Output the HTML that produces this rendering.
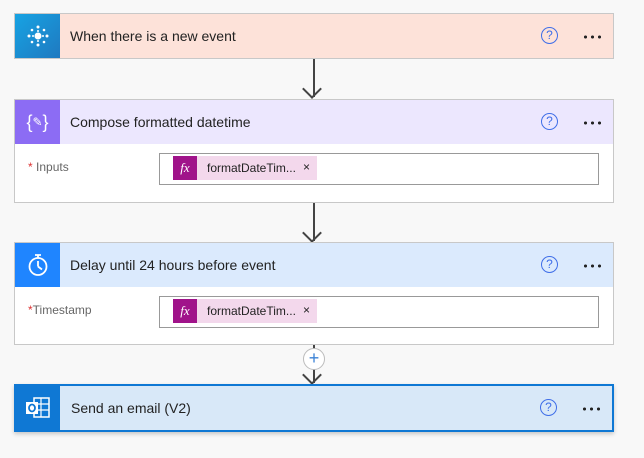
<!DOCTYPE html>
<html><head><style>
body{margin:0;width:644px;height:458px;background:#f8f8f8;font-family:"Liberation Sans",sans-serif;position:relative;overflow:hidden}
.card{position:absolute;left:14px;width:598px;border:1px solid #c8c8c8;background:#fff}
.hd{position:relative;height:44px}
.ic{position:absolute;left:0;top:0;width:45px;height:44px;display:flex;align-items:center;justify-content:center}
.t{position:absolute;left:55px;top:14px;font-size:14px;color:#222}
.q{position:absolute;left:526px;top:13px;width:15px;height:15px;border:1.3px solid #3f6ee8;border-radius:50%;color:#3f6ee8;font-size:12px;text-align:center;line-height:15px}
.d{position:absolute;left:567px;top:21px;width:20px;height:4px;background:radial-gradient(circle,#222 1.4px,transparent 1.7px) 0 0/7px 4px repeat-x}
.lbl{position:absolute;left:13px;font-size:12px;color:#666}
.lbl b{color:#d33;font-weight:normal}
.box{position:absolute;left:144px;width:438px;height:30px;border:1px solid #999;background:#fff}
.tok{position:absolute;left:13px;top:2px;width:144px;height:24px;background:#f3d8ec;font-size:12px;color:#222}
.fx{position:absolute;left:0;top:0;width:24px;height:24px;background:#a0138a;color:#fff;font-family:"Liberation Serif",serif;font-style:italic;font-size:13px;text-align:center;line-height:24px}
.tok span{position:absolute;left:34px;top:5px}
.tok i{position:absolute;left:130px;top:4px;font-style:normal}
.ln{position:absolute;left:313px;width:2px;background:#444}
.ar{position:absolute;left:305px;width:12px;height:12px;border-right:2px solid #444;border-bottom:2px solid #444;transform:rotate(45deg)}
</style></head><body>
<div class="ln" style="top:59px;height:38px"></div><div class="ar" style="top:82px"></div>
<div class="ln" style="top:203px;height:38px"></div><div class="ar" style="top:226px"></div>
<div class="ln" style="top:345px;height:38px"></div><div class="ar" style="top:368px"></div>
<div style="position:absolute;left:303px;top:348px;width:20px;height:20px;border:1px solid #bbb;border-radius:50%;background:#fff;color:#3b82d6;font-size:18px;line-height:19px;text-align:center">+</div>

<div class="card" style="top:13px;background:#fde2d9"><div class="hd">
<div class="ic" style="background:linear-gradient(135deg,#17a3e3,#1f79c0)"><svg width="26" height="26" viewBox="0 0 26 26" fill="#fff"><circle cx="13" cy="13" r="3.5"/><circle cx="13" cy="4" r="1.5"/><circle cx="13" cy="22" r="1.5"/><circle cx="4" cy="13" r="1.5"/><circle cx="22" cy="13" r="1.5"/><circle cx="7" cy="7" r="1.3"/><circle cx="19" cy="7" r="1.3"/><circle cx="7" cy="19" r="1.3"/><circle cx="19" cy="19" r="1.3"/><circle cx="13" cy="8" r="1"/><circle cx="13" cy="18" r="1"/><circle cx="8" cy="13" r="1"/><circle cx="18" cy="13" r="1"/></svg></div>
<div class="t">When there is a new event</div><div class="q">?</div><div class="d"></div></div></div>

<div class="card" style="top:99px;height:102px"><div class="hd" style="background:#ece7fe">
<div class="ic" style="background:#8c6cf4;color:#fff;font-size:18px">{<span style="font-size:12px">✎</span>}</div>
<div class="t">Compose formatted datetime</div><div class="q">?</div><div class="d"></div></div>
<div class="lbl" style="top:60px"><b>*</b> Inputs</div>
<div class="box" style="top:53px"><div class="tok"><div class="fx">fx</div><span>formatDateTim...</span><i>×</i></div></div></div>

<div class="card" style="top:242px;height:101px"><div class="hd" style="background:#dbeafd">
<div class="ic" style="background:#1f85ff"><svg width="22" height="24" viewBox="0 0 22 24" fill="none" stroke="#fff" stroke-width="1.8"><circle cx="11" cy="13.5" r="8.5"/><path d="M8 2h6M11 2v3M11 13.5V8M11 13.5l4 3"/></svg></div>
<div class="t">Delay until 24 hours before event</div><div class="q">?</div><div class="d"></div></div>
<div class="lbl" style="top:60px"><b>*</b>Timestamp</div>
<div class="box" style="top:53px"><div class="tok"><div class="fx">fx</div><span>formatDateTim...</span><i>×</i></div></div></div>

<div class="card" style="top:384px;height:44px;border:2px solid #0f78d4;width:596px;background:#d8e8f8;box-shadow:0 2px 4px rgba(0,0,0,.2)"><div class="hd">
<div class="ic" style="background:#0f78d4;left:0;width:44px"><svg width="26" height="22" viewBox="0 0 26 22"><rect x="9" y="1" width="15" height="19" fill="none" stroke="#fff" stroke-width="1.5"/><path d="M9 7h15M9 13h15M16 1v19" stroke="#fff" stroke-width="1.2"/><rect x="1" y="5" width="12" height="12" fill="#fff"/><ellipse cx="7" cy="11" rx="3" ry="3.5" fill="none" stroke="#0f78d4" stroke-width="1.8"/></svg></div>
<div class="t" style="left:55px">Send an email (V2)</div><div class="q" style="left:524px">?</div><div class="d" style="left:565px"></div></div></div>
</body></html>
